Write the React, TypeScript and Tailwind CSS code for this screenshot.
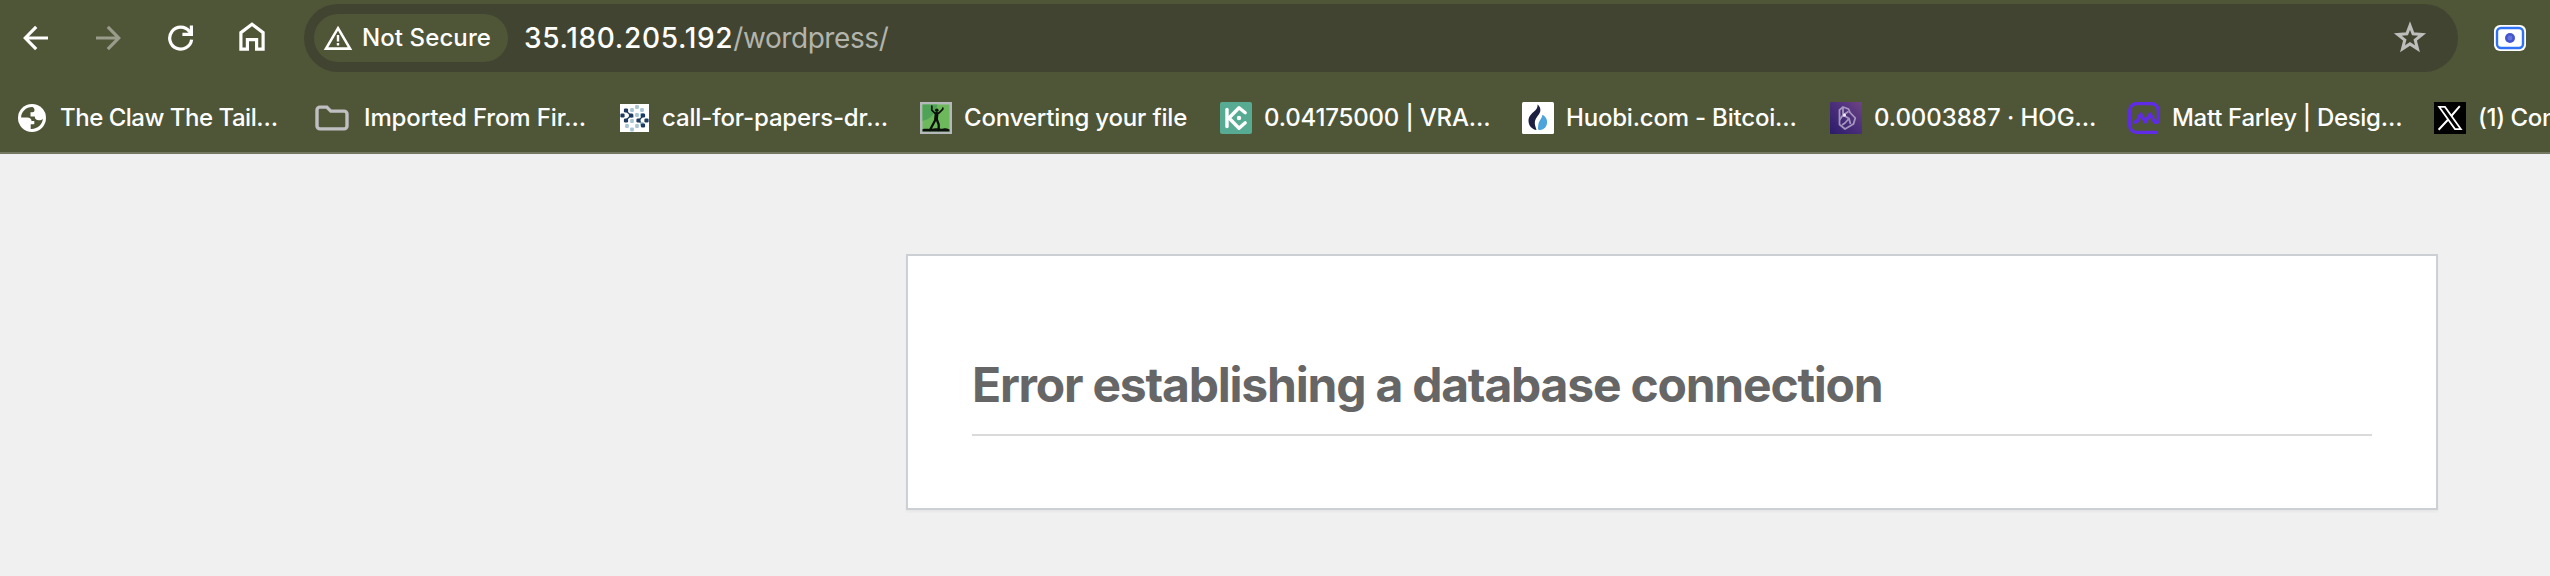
import type { ReactNode } from "react";

function BackIcon() {
  return (
    <svg width="26" height="26" viewBox="0 0 26 26" fill="none" stroke="currentColor" strokeWidth="3.2">
      <path d="M25 13H3M13.2 1.9 2.3 13l10.9 11.1" />
    </svg>
  );
}

function ReloadIcon() {
  return (
    <svg width="28" height="28" viewBox="0 0 28 28" fill="none">
      <path d="M24.6 15.6A11 11 0 1 1 22.4 7.4L24 9.4" stroke="white" strokeWidth="3.2" />
      <path d="M26 1.6V12H15.4V8.8h7.4V1.6z" fill="white" />
    </svg>
  );
}

function HomeIcon() {
  return (
    <svg width="26" height="30" viewBox="0 0 26 30" fill="none" stroke="white" strokeWidth="3.2">
      <path d="M1.9 27.1V10.6L13 2.2l11.1 8.4v16.5h-6.5v-9.4H8.4v9.4z" />
    </svg>
  );
}

function WarningIcon() {
  return (
    <svg width="30" height="26" viewBox="0 0 30 26" fill="none">
      <path d="M15 3.2 27 23.6H3z" stroke="white" strokeWidth="2.6" />
      <path d="M13.8 10h2.4v6.4h-2.4zM13.8 18h2.4v2.4h-2.4z" fill="white" />
    </svg>
  );
}

function StarIcon() {
  return (
    <svg width="34" height="32" viewBox="0 0 34 32" fill="none">
      <path
        d="M17 4.6l3.1 8.2 9.1.6-7 5.6 2.3 8.8-7.5-4.9-7.5 4.9 2.3-8.8-7-5.6 9.1-.6z"
        stroke="#bdbdbb"
        strokeWidth="3"
      />
    </svg>
  );
}

function CameraIcon() {
  return (
    <svg width="32" height="26" viewBox="0 0 32 26">
      <rect width="32" height="26" rx="6" fill="white" />
      <rect x="3" y="3" width="26" height="20" rx="4" fill="white" stroke="#2f72f5" strokeWidth="2.4" />
      <circle cx="16" cy="13" r="5" fill="#4355cf" />
      <circle cx="16" cy="13" r="2.4" fill="#6474d8" />
    </svg>
  );
}

function GlobeIcon() {
  return (
    <svg width="28" height="28" viewBox="0 0 28 28">
      <circle cx="14" cy="14" r="14" fill="white" />
      <path
        d="M14.4 3.1C8 3 3.2 8 3.1 13.6h6.2c2.6 0 4.2 1.4 4.2 3.4h2.8v3.2h-3.6v4.7c6.3.5 11.7-4.3 12.2-10.1-1 1.2-2.3 1.5-4 1.5-2.7 0-4.1-1.3-4.1-3.8h-4.3V8.300h1.800c1.5 0 2.2-.7 2.2-2.2 0-1.3-.8-2.2-2.1-3z"
        fill="#4f5537"
      />
    </svg>
  );
}

function FolderIcon() {
  return (
    <svg width="34" height="26" viewBox="0 0 34 26" fill="none">
      <path
        d="M5 2.1h6.8l4 4H29a3 3 0 0 1 3 3V20.9a3 3 0 0 1-3 3H5a3 3 0 0 1-3-3V5.1a3 3 0 0 1 3-3z"
        stroke="#c0c0c2"
        strokeWidth="3.4"
      />
    </svg>
  );
}

const lightDots = [
  [17, 3], [12, 6], [22, 6], [17, 11], [12, 17], [17, 22], [7, 22], [12, 25.5], [22, 11], [12, 12], [22, 20],
];
const darkDots = [
  [6, 6.5], [2.5, 11.5], [6, 16.5], [11, 11.5], [23, 11.5], [18.5, 16.5], [26.5, 16.5], [23, 21.5],
];

function DotsIcon() {
  return (
    <svg width="29" height="28" viewBox="0 0 29 28">
      <rect width="29" height="28" fill="white" />
      <path d="M6 7l5 4.5-5 4.5M23 12l-4.500 4.500 4.500 4.500" fill="none" stroke="#1f3a5f" strokeWidth="1.2" />
      {lightDots.map(([x, y]) => (
        <rect key={`${x}-${y}`} x={x - 1.9} y={y - 1.9} width="3.8" height="3.8" rx="1.2" fill="#a9c5d2" />
      ))}
      {darkDots.map(([x, y]) => (
        <rect key={`${x}-${y}`} x={x - 2.1} y={y - 2.1} width="4.2" height="4.2" rx="1.3" fill="#1f3a5f" />
      ))}
    </svg>
  );
}

function FigureIcon() {
  return (
    <svg width="32" height="32" viewBox="0 0 32 32">
      <rect width="32" height="32" fill="#b5b8bb" />
      <rect x="2.5" y="2.5" width="27" height="27" fill="#6db85a" />
      <path d="M2.5 2.5h15C16 12 10 17 2.5 19z" fill="#4fa356" />
      <path d="M2.5 29.5v-2.3c4-1 7 .6 11-.6 5-1.2 7 .5 10 0 3-.8 5 .4 6 1v1.9z" fill="#0b100b" />
      <g fill="none" stroke="#0b100b" strokeLinecap="round" strokeLinejoin="round">
        <path d="M11.8 4v4.2l3 3h4l4-4V6" strokeWidth="1.7" />
        <path d="M16.600 11.8 16 17" strokeWidth="3.8" />
        <path d="M15.300 18 10 28M17 18l1.700 4.500V28" strokeWidth="2.3" />
      </g>
      <circle cx="16.8" cy="8.2" r="1.8" fill="#0b100b" />
    </svg>
  );
}

function KuCoinIcon() {
  return (
    <svg width="32" height="32" viewBox="0 0 32 32">
      <rect width="32" height="32" rx="2" fill="#57ab93" />
      <g fill="none" stroke="white" strokeWidth="3.4" strokeLinecap="round" strokeLinejoin="round">
        <path d="M7 7.5v17" />
        <path d="M25.2 10.8 19 5.8 9 16l10 10.2 6.2-5.4" />
      </g>
      <circle cx="19" cy="16" r="2.2" fill="white" />
    </svg>
  );
}

function HuobiIcon() {
  return (
    <svg width="32" height="32" viewBox="0 0 32 32">
      <rect width="32" height="32" rx="1.5" fill="white" />
      <path
        d="M15.6 2.5c3.2 2.5 3.6 6.6 1.5 9.500-2.600 3.500-4.600 6-4.300 9.600.2 2.600 1.200 4.600 1.700 6.400-4.500-.8-8-4.300-8-9.300 0-4 2.500-6.400 5-8.700 3-2.600 4.300-4.500 4.100-7.500z"
        fill="#1c1f42"
      />
      <path
        d="M20.4 12.8c2.6 1.3 4.9 4 4.7 7.7-.2 4-2.9 7.2-7 7.6-1.8.1-2.3-.8-2.1-2.6.4-2.2.2-4.2 1.4-6.2 1.2-2.1 2.7-3.6 3-6.5z"
        fill="#4da3dc"
      />
    </svg>
  );
}

function HogeIcon() {
  return (
    <svg width="32" height="32" viewBox="0 0 32 32">
      <defs>
        <linearGradient id="violet" x1="0" y1="1" x2="1" y2="0">
          <stop offset="0" stopColor="#2b1b6b" />
          <stop offset="0.6" stopColor="#50327c" />
          <stop offset="1" stopColor="#6e4484" />
        </linearGradient>
      </defs>
      <rect width="32" height="32" rx="1" fill="url(#violet)" />
      <g fill="none" stroke="#b6a8cc" strokeWidth="1.8" strokeLinejoin="round" opacity="0.85">
        <path d="M13 5 9.500 8v14.500L15 27l8.500-5 1.800-6-5.300-5.500-1.500-3.500z" />
        <path d="M13 5v8l-3.500 5M18.500 9.500 13 13M13 13l6 3.500-4 4.500-3 2M19 16.500l1.500 5.500" />
      </g>
      <circle cx="14.5" cy="13" r="1.5" fill="#f2eef8" />
    </svg>
  );
}

function FarleyIcon() {
  return (
    <svg width="32" height="32" viewBox="0 0 32 32" fill="none" stroke="#5f2be6" strokeWidth="3.3">
      <path
        d="M29.3 30.3H8.500a6.800 6.800 0 0 1-6.800-6.800v-15a6.800 6.800 0 0 1 6.800-6.800h15a6.800 6.800 0 0 1 6.800 6.800v9.700a2.200 2.200 0 0 1-4.100 1.100L22 12l-4.600 8-4.800-8-3 6.500c-.6 1.300-1.500 1.700-3.600 1.700"
        strokeLinejoin="round"
      />
    </svg>
  );
}

function XIcon() {
  return (
    <svg width="32" height="32" viewBox="0 0 32 32">
      <rect width="32" height="32" fill="black" />
      <path d="M5.2 4.9h5.8l15.8 22.2H21z" fill="none" stroke="white" strokeWidth="1.8" />
      <path d="M25.8 4.200 17.300 14M14.400 17.300 4.600 27.800" stroke="white" strokeWidth="2" />
    </svg>
  );
}

type Bookmark = { label: string; icon: ReactNode; box: string; gap: string; text: string };

const bookmarks: Bookmark[] = [
  { label: "The Claw The Tail…", icon: <GlobeIcon />, box: "w-[297px]", gap: "gap-[14px]", text: "tracking-[-0.48px]" },
  { label: "Imported From Fir…", icon: <FolderIcon />, box: "w-[305px]", gap: "gap-[15px]", text: "tracking-[-0.14px]" },
  { label: "call-for-papers-dr…", icon: <DotsIcon />, box: "w-[300px]", gap: "gap-[13px]", text: "tracking-[-0.15px]" },
  { label: "Converting your file", icon: <FigureIcon />, box: "w-[300px]", gap: "gap-3", text: "tracking-[-0.17px]" },
  { label: "0.04175000 | VRA…", icon: <KuCoinIcon />, box: "w-[302px]", gap: "gap-3", text: "tracking-[-0.17px]" },
  { label: "Huobi.com - Bitcoi…", icon: <HuobiIcon />, box: "w-[308px]", gap: "gap-3", text: "tracking-[-0.2px]" },
  { label: "0.0003887 · HOG…", icon: <HogeIcon />, box: "w-[298px]", gap: "gap-3", text: "tracking-[-0.04px]" },
  { label: "Matt Farley | Desig…", icon: <FarleyIcon />, box: "w-[306px]", gap: "gap-3", text: "tracking-[-0.3px]" },
  { label: "(1) Connect", icon: <XIcon />, box: "w-[306px]", gap: "gap-3", text: "tracking-[-0.4px]" },
];

function Toolbar() {
  return (
    <div className="flex h-[72px] shrink-0 items-center pt-1">
      <div className="flex w-[304px] shrink-0 items-center pl-[23px] text-white">
        <BackIcon />
        <div className="ml-[46px] rotate-180 text-[#999c8a]">
          <BackIcon />
        </div>
        <div className="ml-[46px]">
          <ReloadIcon />
        </div>
        <div className="ml-11 pb-0.5">
          <HomeIcon />
        </div>
      </div>
      <div className="flex h-[68px] w-[2154px] shrink-0 items-center rounded-full bg-[#414430] pr-[31px] pl-2.5">
        <div className="flex h-12 w-[194px] shrink-0 items-center gap-[9px] rounded-full bg-[#4f5537] pl-[9px]">
          <WarningIcon />
          <span className="text-2xl font-medium tracking-[0.1px] whitespace-nowrap">Not Secure</span>
        </div>
        <div className="ml-4 flex grow items-center text-[28px] leading-9 font-medium whitespace-nowrap">
          <span className="tracking-[0.68px]">35.180.205.192</span>
          <span className="font-normal tracking-[-0.42px] text-[#b3b4ad]">/wordpress/</span>
        </div>
        <div className="pb-0.5">
          <StarIcon />
        </div>
      </div>
      <div className="ml-9 shrink-0">
        <CameraIcon />
      </div>
    </div>
  );
}

function BookmarksBar() {
  return (
    <div className="mt-3 flex h-[68px] items-center pl-[18px]">
      {bookmarks.map((b) => (
        <div key={b.label} className={`flex shrink-0 items-center ${b.box} ${b.gap}`}>
          <div className="shrink-0">{b.icon}</div>
          <span className={`text-2xl font-medium whitespace-nowrap ${b.text}`}>{b.label}</span>
        </div>
      ))}
    </div>
  );
}

export default function App() {
  return (
    <div className="flex h-[576px] w-full flex-col overflow-hidden bg-[#f0f0f0] font-['Inter',sans-serif]">
      <header className="h-[154px] shrink-0 overflow-hidden border-b-2 border-[#747960] bg-[#4f5537] text-white">
        <Toolbar />
        <BookmarksBar />
      </header>
      <main className="mt-[100px] ml-[906px] h-64 w-[1532px] border-2 border-[#ccd0d4] bg-white px-16 pt-[100px] shadow-[0_2px_2px_rgba(0,0,0,0.04)]">
        <h1 className="border-b-2 border-[#dadada] pb-[21px] text-5xl leading-[57px] font-bold tracking-[-1.22px] whitespace-nowrap text-[#666]">
          Error establishing a database connection
        </h1>
      </main>
    </div>
  );
}
